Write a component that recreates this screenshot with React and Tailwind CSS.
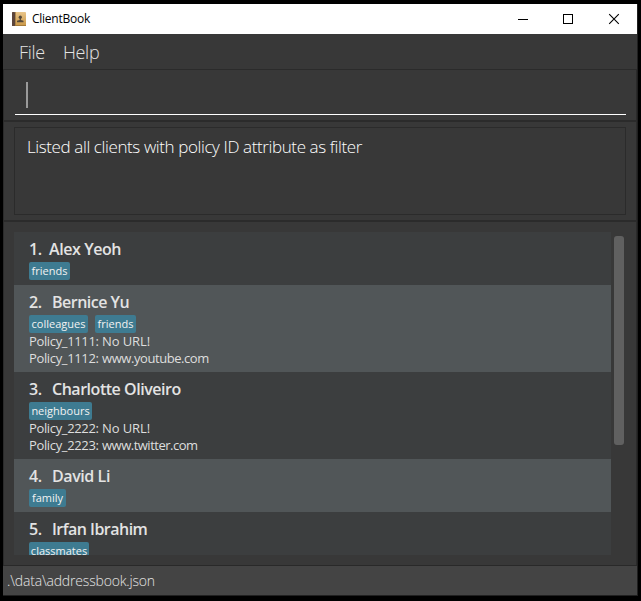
const clients = [
  { no: 1, gap: 'w-[20px]', name: 'Alex Yeoh', track: 'tracking-[-0.42px]', tags: [['friends', 'w-[41px]']], policies: [] },
  {
    no: 2, gap: 'w-[23px]', name: 'Bernice Yu', track: 'tracking-[-0.5px]', tags: [['colleagues', 'w-[59px]'], ['friends', 'w-[41px]']],
    policies: [['Policy_1111:', 'No URL!', 'tracking-[-0.1px]'], ['Policy_1112:', 'www.youtube.com', 'tracking-[-0.43px]']],
  },
  {
    no: 3, gap: 'w-[23px]', name: 'Charlotte Oliveiro', track: 'tracking-[-0.47px]', tags: [['neighbours', 'w-[63px]']],
    policies: [['Policy_2222:', 'No URL!', 'tracking-[-0.1px]'], ['Policy_2223:', 'www.twitter.com', 'tracking-[-0.5px]']],
  },
  { no: 4, gap: 'w-[23px]', name: 'David Li', track: 'tracking-[-0.42px]', tags: [['family', 'w-[37px]']], policies: [] },
  { no: 5, gap: 'w-[23px]', name: 'Irfan Ibrahim', track: 'tracking-[-0.52px]', tags: [['classmates', 'w-[60px]']], policies: [] },
];

function BookIcon() {
  return (
    <svg className="ml-[9px] h-[14px] w-[14px] shrink-0" viewBox="0 0 14 14">
      <defs>
        <linearGradient id="cover" x1="0" y1="0" x2="0" y2="1">
          <stop offset="0" stopColor="#e9c58a" />
          <stop offset="1" stopColor="#c99746" />
        </linearGradient>
      </defs>
      <rect width="14" height="14" rx="0.8" fill="url(#cover)" />
      <rect width="3" height="14" rx="0.6" fill="#5c453b" />
      <rect x="3" width="0.8" height="14" fill="#a17b45" />
      <rect x="3" y="13" width="11" height="1" fill="#a67b38" />
      <circle cx="8.3" cy="5.2" r="1.6" fill="#54483a" />
      <path d="M7.700 6h1.200v2l2.600.7v1.500H5V8.700L7.700 8z" fill="#54483a" />
    </svg>
  );
}

function TitleBar() {
  return (
    <header className="flex h-[30px] shrink-0 items-center bg-white text-black">
      <BookIcon />
      <span className="ml-[6px] text-[12px] leading-[16px] tracking-[-0.25px]">ClientBook</span>
      <svg className="mr-[17px] ml-auto h-[12px] w-[104px]" viewBox="0 0 104 12" fill="none" stroke="#000">
        <path d="M2 6.500h10" shapeRendering="crispEdges" />
        <rect x="47.500" y="1.500" width="9" height="9" shapeRendering="crispEdges" />
        <path d="M93.200 1.200l9.600 9.600m0-9.600l-9.600 9.600" strokeWidth="1.100" />
      </svg>
    </header>
  );
}

function ClientRow({ client }) {
  return (
    <li className="shrink-0 px-[15px] pt-[6px] pb-[5px] odd:bg-[#3c3e3f] even:bg-[#515658]">
      <div className="flex h-[22px] items-center text-[16px] leading-[22px] font-semibold text-[#e3e3e3]">
        <span className={`shrink-0 tracking-[-0.5px] ${client.gap}`}>{client.no}.</span>
        <span className={client.track}>{client.name}</span>
      </div>
      <div className="flex h-[20px] items-start gap-[7px] pt-[2px]">
        {client.tags.map(([tag, width]) => (
          <span
            key={tag}
            className={`flex h-[18px] items-center justify-center rounded-[2px] bg-[#3e7b91] text-[11px] leading-[16px] whitespace-nowrap text-[#f2f2f2] ${width}`}
          >
            {tag}
          </span>
        ))}
      </div>
      {client.policies.map(([id, url, track]) => (
        <p key={id} className="flex h-[17px] text-[13px] leading-[17px] text-[#dedede]">
          <span className="w-[73px] shrink-0 tracking-[-0.35px]">{id}</span>
          <span className={track}>{url}</span>
        </p>
      ))}
    </li>
  );
}

export default function App() {
  return (
    <div className="h-[601px] w-[641px] overflow-hidden bg-black pt-[4px] pl-[3px] font-['Open_Sans','Noto_Sans',sans-serif]">
      <div className="flex h-[592px] w-[635px] flex-col border-r border-b border-[#202020] bg-[#383838]">
        <TitleBar />
        <nav className="flex h-[35px] shrink-0 items-center gap-[18px] pl-[16px] text-[18px] leading-[24px] font-light text-[#e4e4e4]">
          <span className="tracking-[-0.3px]">File</span>
          <span className="tracking-[-0.3px]">Help</span>
        </nav>
        <div className="flex h-[496px] shrink-0 flex-col border-x border-t border-[#2b2b2b]">
          <section className="h-[52px] shrink-0 border-b-2 border-[#2b2b2b] px-[11px]">
            <div className="flex h-[45px] w-[611px] border-b border-white pt-[12px] pl-[11px]">
              <span className="h-[26px] w-[2px] bg-[#9a9a9a]" />
            </div>
          </section>
          <section className="h-[100px] shrink-0 border-b-2 border-[#2b2b2b] pt-[5px] pl-[10px]">
            <div className="h-[88px] w-[612px] border border-[#2b2b2b] pt-[7px] pl-[12px] text-[17px] leading-[24px] font-light text-white">
              <p className="tracking-[-0.39px]">Listed all clients with policy ID attribute as filter</p>
            </div>
          </section>
          <section className="flex grow pt-[10px] pl-[10px]">
            <ul className="flex h-[323px] w-[597px] flex-col overflow-hidden">
              {clients.map((client) => <ClientRow key={client.no} client={client} />)}
            </ul>
            <div className="mt-[4px] ml-[3px] h-[209px] w-[10px] rounded-[3px] bg-[#606060]" />
          </section>
        </div>
        <footer className="flex h-[30px] shrink-0 items-center border-t border-[#292929] bg-[#444444] pl-[4px] text-[14px] leading-[20px] font-light text-[#e4e4e4]">
          <span className="tracking-[-0.18px]">.\data\addressbook.json</span>
        </footer>
      </div>
    </div>
  );
}
